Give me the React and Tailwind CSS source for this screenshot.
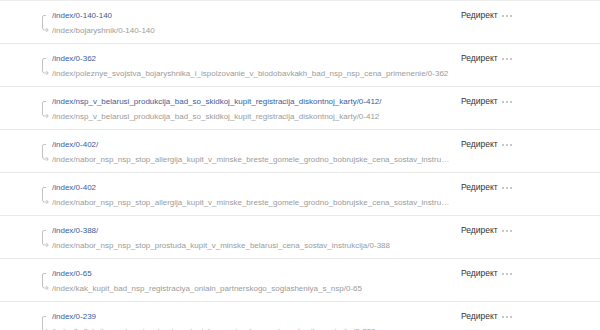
import React from "react";

const rows = [
  ["/index/0-140-140", "/index/bojaryshnik/0-140-140"],
  ["/index/0-362", "/index/poleznye_svojstva_bojaryshnika_i_ispolzovanie_v_biodobavkakh_bad_nsp_nsp_cena_primenenie/0-362"],
  ["/index/nsp_v_belarusi_produkcija_bad_so_skidkoj_kupit_registracija_diskontnoj_karty/0-412/", "/index/nsp_v_belarusi_produkcija_bad_so_skidkoj_kupit_registracija_diskontnoj_karty/0-412"],
  ["/index/0-402/", "/index/nabor_nsp_nsp_stop_allergija_kupit_v_minske_breste_gomele_grodno_bobrujske_cena_sostav_instrukcija/0-402"],
  ["/index/0-402", "/index/nabor_nsp_nsp_stop_allergija_kupit_v_minske_breste_gomele_grodno_bobrujske_cena_sostav_instrukcija/0-402"],
  ["/index/0-388/", "/index/nabor_nsp_nsp_stop_prostuda_kupit_v_minske_belarusi_cena_sostav_instrukcija/0-388"],
  ["/index/0-65", "/index/kak_kupit_bad_nsp_registraciya_onlain_partnerskogo_soglasheniya_s_nsp/0-65"],
  ["/index/0-239", "/index/kollekcija_sust_mejn_street_sust_ot_barmoni_vybo_mestnoe_kupit_v_minske/0-239"],
];

function RedirectIcon() {
  return (
    <svg width="10" height="22" viewBox="0 0 10 22" fill="none" stroke="#c2c2c2" strokeWidth="1" className="shrink-0 mt-[12px]">
      <path d="M6 2.5 H4 Q2.5 2.5 2.5 4 V15 Q2.5 17 4.5 17 H8" />
      <path d="M6.3 15 L8.3 17 L6.3 19" />
    </svg>
  );
}

function Dots() {
  return (
    <span className="flex items-center gap-[2px]">
      <span className="w-[2px] h-[2px] rounded-full bg-[#b5b5b5]" />
      <span className="w-[2px] h-[2px] rounded-full bg-[#b5b5b5]" />
      <span className="w-[2px] h-[2px] rounded-full bg-[#b5b5b5]" />
    </span>
  );
}

export default function App() {
  return (
    <div className="w-[600px] h-[330px] overflow-hidden bg-white border-t border-[#ededed]" style={{ fontFamily: '"Liberation Sans", Arial, sans-serif' }}>
      {rows.map(([a, b], i) => (
        <div key={i} className="flex h-[43px] border-b border-[#e8e8e8] pl-[40px]">
          <RedirectIcon />
          <div className="flex flex-col pt-[7px] pl-[2px] w-[400px] shrink-0 min-w-0">
            <div className="text-[8px] leading-[15px] text-[#3b5b9c] truncate">{a}</div>
            <div className="text-[8px] leading-[15px] text-[#9b9b9b] truncate">{b}</div>
          </div>
          <div className="flex items-center gap-[4px] pt-[7px] h-[22px] pl-[11px]">
            <span className="text-[8.5px] leading-[15px] text-[#333]">Редирект</span>
            <Dots />
          </div>
        </div>
      ))}
    </div>
  );
}
